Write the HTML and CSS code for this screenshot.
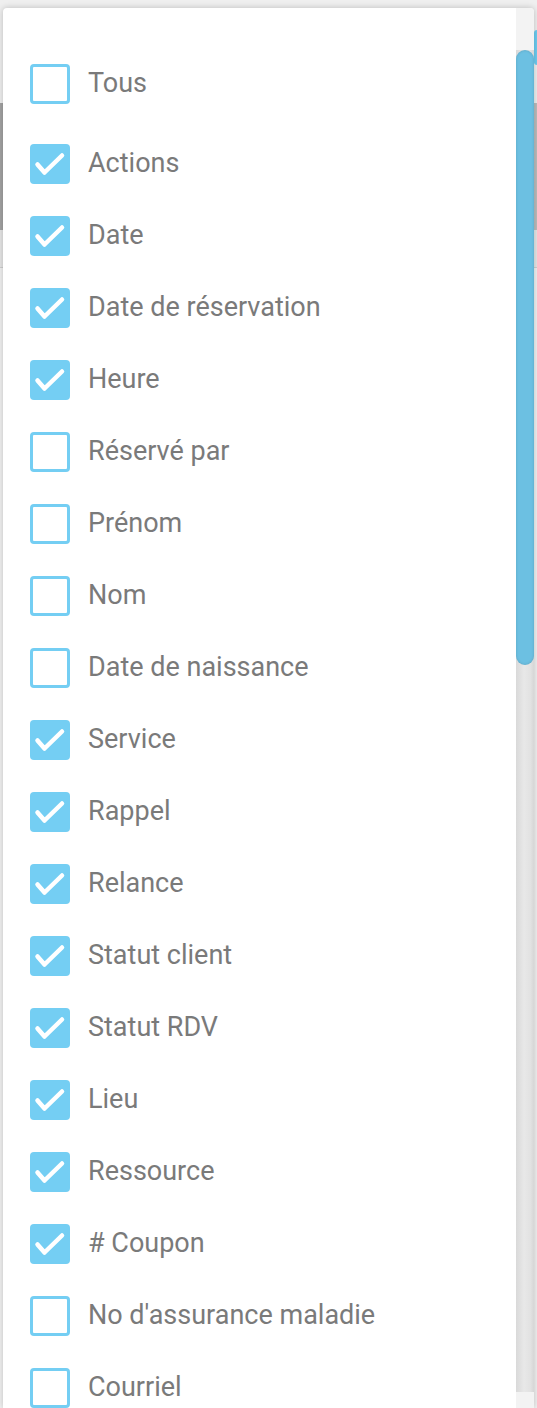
FILE: index.html
```html
<!DOCTYPE html>
<html lang="fr">
<head>
    <meta charset="UTF-8">
    <meta name="viewport" content="width=device-width, initial-scale=1.0">
    <title>Colonnes</title>
    <link rel="stylesheet" href="styles.css">
</head>
<body>
    <div class="page">
        <div class="topbar"><span class="top-btn"></span></div>
        <div class="banner"></div>
        <div class="toolbar"></div>
        <div class="content"></div>
    </div>

    <div class="dropdown">
        <ul class="options">
            <li class="all"><span class="box"></span>Tous</li>
            <li><span class="box on"><svg viewBox="0 0 40 40"><path d="M7.5 20.5 L14.5 28.5 L32 11.5"/></svg></span>Actions</li>
            <li><span class="box on"><svg viewBox="0 0 40 40"><path d="M7.5 20.5 L14.5 28.5 L32 11.5"/></svg></span>Date</li>
            <li><span class="box on"><svg viewBox="0 0 40 40"><path d="M7.5 20.5 L14.5 28.5 L32 11.5"/></svg></span>Date de réservation</li>
            <li><span class="box on"><svg viewBox="0 0 40 40"><path d="M7.5 20.5 L14.5 28.5 L32 11.5"/></svg></span>Heure</li>
            <li><span class="box"></span>Réservé par</li>
            <li><span class="box"></span>Prénom</li>
            <li><span class="box"></span>Nom</li>
            <li><span class="box"></span>Date de naissance</li>
            <li><span class="box on"><svg viewBox="0 0 40 40"><path d="M7.5 20.5 L14.5 28.5 L32 11.5"/></svg></span>Service</li>
            <li><span class="box on"><svg viewBox="0 0 40 40"><path d="M7.5 20.5 L14.5 28.5 L32 11.5"/></svg></span>Rappel</li>
            <li><span class="box on"><svg viewBox="0 0 40 40"><path d="M7.5 20.5 L14.5 28.5 L32 11.5"/></svg></span>Relance</li>
            <li><span class="box on"><svg viewBox="0 0 40 40"><path d="M7.5 20.5 L14.5 28.5 L32 11.5"/></svg></span>Statut client</li>
            <li><span class="box on"><svg viewBox="0 0 40 40"><path d="M7.5 20.5 L14.5 28.5 L32 11.5"/></svg></span>Statut RDV</li>
            <li><span class="box on"><svg viewBox="0 0 40 40"><path d="M7.5 20.5 L14.5 28.5 L32 11.5"/></svg></span>Lieu</li>
            <li><span class="box on"><svg viewBox="0 0 40 40"><path d="M7.5 20.5 L14.5 28.5 L32 11.5"/></svg></span>Ressource</li>
            <li><span class="box on"><svg viewBox="0 0 40 40"><path d="M7.5 20.5 L14.5 28.5 L32 11.5"/></svg></span># Coupon</li>
            <li><span class="box"></span>No d'assurance maladie</li>
            <li><span class="box"></span>Courriel</li>
        </ul>
        <div class="scrollbar">
            <div class="sb-cap"></div>
            <div class="sb-track"><div class="sb-thumb"></div></div>
            <div class="sb-cap end"></div>
        </div>
    </div>
</body>
</html>
```

FILE: styles.css
```css
* { box-sizing: border-box; margin: 0; padding: 0; }
body { width: 537px; height: 1408px; overflow: hidden; background: #f2f2f2; font-family: Roboto, "Liberation Sans", sans-serif; }

/* page behind the dropdown */
.page { display: flex; flex-direction: column; height: 100%; }
.topbar { height: 103px; background: #efefef; display: flex; justify-content: flex-end; padding-top: 30px; }
.top-btn { width: 3px; height: 35px; background: #6ccdf2; border-radius: 3px 0 0 3px; }
.banner { height: 127px; background: linear-gradient(to right, #a3a3a3, #bcbcbc); }
.toolbar { height: 38px; background: #e6e6e6; border-bottom: 1px solid #cfcfcf; }
.content { flex: 1; background: #f1f1f1; }

/* dropdown */
.dropdown { position: absolute; top: 8px; left: 3px; width: 531px; height: 1400px; display: flex; background: #fff; border-radius: 4px 4px 0 0; box-shadow: 0 0 6px rgba(0, 0, 0, 0.22); overflow: hidden; }
.options { flex: 1; list-style: none; padding: 40px 0 0 27px; }
.options li { display: flex; align-items: center; height: 72px; font-size: 27px; color: #7a7a7a; padding-bottom: 3px; }
.options li.all { margin-bottom: 8px; }

.box { flex: none; width: 40px; height: 40px; margin: 3px 18px 0 0; border: 3px solid #74cef3; border-radius: 4px; background: #fff; }
.box.on { border: none; background: #74cef3; }
.box svg { display: block; width: 40px; height: 40px; }
.box path { fill: none; stroke: #fff; stroke-width: 4.5; stroke-linecap: round; stroke-linejoin: round; }

.scrollbar { width: 18px; display: flex; flex-direction: column; }
.sb-cap { height: 42px; background: #f3f3f3; }
.sb-cap.end { height: 16px; }
.sb-track { flex: 1; background: linear-gradient(to right, #d9d9d9, #e8e8e8 45%, #e2e2e2 80%, #d6d6d6); }
.sb-thumb { height: 615px; border-radius: 9px; background: #6cc0e2; box-shadow: inset 0 0 3px rgba(0, 0, 0, 0.15); }
```
